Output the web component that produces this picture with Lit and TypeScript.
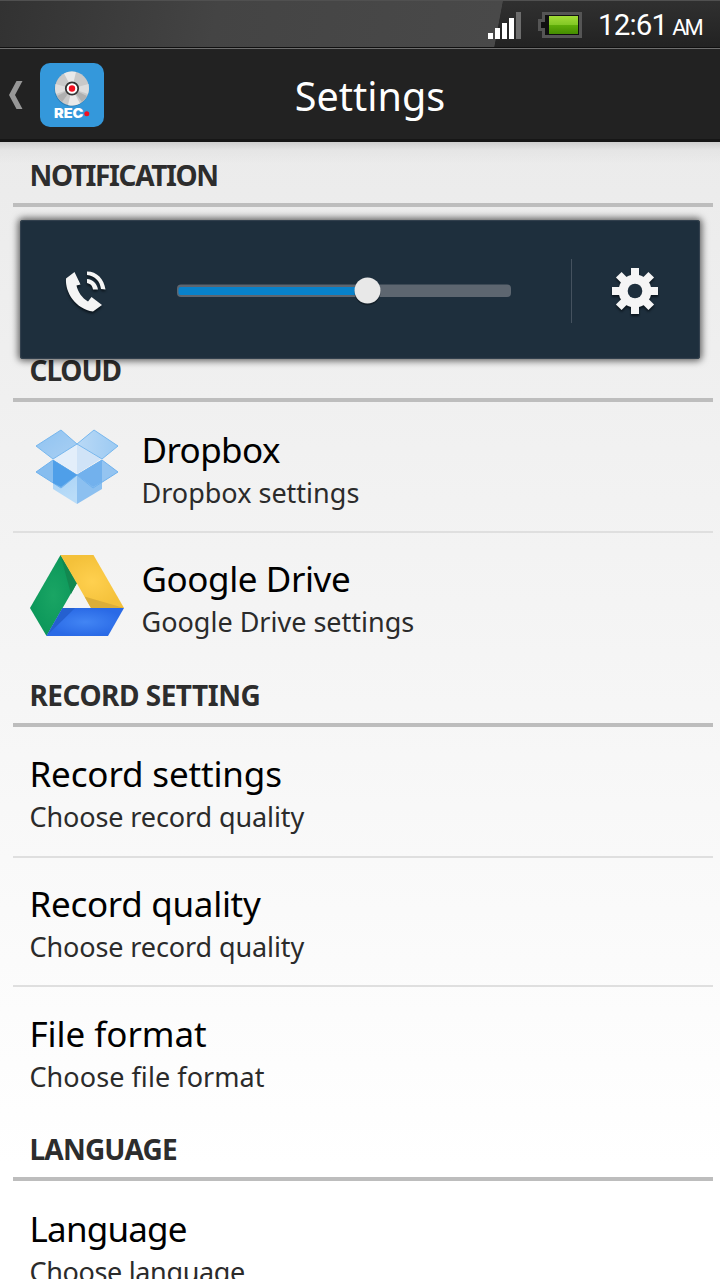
import { LitElement, html, css, svg, nothing } from "lit";
import { customElement } from "lit/decorators.js";

const dropbox = html`<svg class="dropbox" viewBox="0 0 84 76">
  <defs>
    <linearGradient id="dl" x1="0" y1="0" x2="1" y2="1"><stop offset="0" stop-color="#8fc3f1"/><stop offset="1" stop-color="#a9cff3"/></linearGradient>
    <linearGradient id="dr" x1="0" y1="0" x2="1" y2="0"><stop offset="0" stop-color="#b9d9f6"/><stop offset="1" stop-color="#9ccaf2"/></linearGradient>
    <linearGradient id="db" x1="0" y1="0" x2="0.3" y2="1"><stop offset="0" stop-color="#9fcdf4"/><stop offset="1" stop-color="#b9dcf8"/></linearGradient>
  </defs>
  <path d="M18 31V60L42 75V46z" fill="url(#db)"/>
  <path d="M67 31V60L42 75V46z" fill="#8cc0f0"/>
  <path d="M18 31L1 43 26 59 42 46z" fill="#86bdef" stroke="#6fb2ee"/>
  <path d="M18 31V54L26 58 42 46z" fill="#4f9fe9"/>
  <path d="M67 31L83 43 58 59 42 46z" fill="#94c4f1" stroke="#6fb2ee"/>
  <path d="M67 31V53L58 58 42 46z" fill="#72b1ed"/>
  <path d="M42 15L18 30 42 45z" fill="#e3eefa"/>
  <path d="M42 15L66 30 42 45z" fill="#d0e3f7"/>
  <path d="M26 1L42 15 18 30 1 17z" fill="url(#dl)" stroke="#77b7ee"/>
  <path d="M59 1L42 15 67 30 83 17z" fill="url(#dr)" stroke="#77b7ee"/>
</svg>`;

const drive = html`<svg class="drive" viewBox="0 0 94 81">
  <defs>
    <radialGradient id="gg"><stop offset="0" stop-color="#1aa564"/><stop offset="1" stop-color="#0c975a"/></radialGradient>
    <radialGradient id="gy"><stop offset="0" stop-color="#ffd04f"/><stop offset="1" stop-color="#f4c13a"/></radialGradient>
    <radialGradient id="gb"><stop offset="0" stop-color="#4285f4"/><stop offset="1" stop-color="#2a6ae6"/></radialGradient>
  </defs>
  <path d="M30.500 0L47 28 16.500 81 0 53z" fill="url(#gg)"/>
  <path d="M30.500 0L47 28 41 39z" fill="#128850"/>
  <path d="M30.500 0H63.500L94 53H61z" fill="url(#gy)"/>
  <path d="M94 53L54.500 41.500 61 53z" fill="#dcae38"/>
  <path d="M32.500 53H94L78 81H16.500z" fill="url(#gb)"/>
  <path d="M32.500 53H45L16.500 81z" fill="#2560d0"/>
</svg>`;

/* A label and its letter-spacing in pixels. */
type Label = [text: string, tracking: number];
interface Row { title: Label; sub: Label; icon?: unknown }
const sections: { name: Label; rows: Row[] }[] = [
  { name: ["NOTIFICATION", -1.38], rows: [{ title: ["", 0], sub: ["", 0] }] },
  { name: ["CLOUD", -1.1], rows: [
    { title: ["Dropbox", -0.6], sub: ["Dropbox settings", 0], icon: dropbox },
    { title: ["Google Drive", -0.42], sub: ["Google Drive settings", 0], icon: drive },
  ] },
  { name: ["RECORD SETTING", -0.5], rows: [
    { title: ["Record settings", -0.15], sub: ["Choose record quality", -0.11] },
    { title: ["Record quality", -0.3], sub: ["Choose record quality", -0.11] },
    { title: ["File format", -0.05], sub: ["Choose file format", 0.06] },
  ] },
  { name: ["LANGUAGE", -0.8], rows: [{ title: ["Language", -0.8], sub: ["Choose language", -0.35] }] },
];

const label = (cls: string, [text, tracking]: Label) =>
  html`<div class=${cls} style="letter-spacing:${tracking}px">${text}</div>`;

@customElement("app-root")
export class AppRoot extends LitElement {
  static styles = css`
    :host { display: flex; flex-direction: column; position: relative; height: 1279px; overflow: hidden;
      font-family: "Noto Sans", sans-serif; background: #fff; }
    * { box-sizing: border-box; }
    svg { display: block; flex: none; overflow: visible; }
    .status { flex: none; height: 49px; display: flex; justify-content: flex-end; align-items: flex-start;
      border-top: 1px solid #505050; border-bottom: 1px solid #6e6e6e; box-shadow: inset 0 -1px #101010;
      background: linear-gradient(100.600deg, #323232 0, #444 30%, #494949 68.950%, transparent 69.050%), linear-gradient(#303030, #222); }
    .signal { margin: 11px 17px 0 0; }
    .battery { margin: 11px 16px 0 0; }
    .clock { color: #fff; font: 29.500px/48px Roboto, sans-serif; width: 122px; white-space: nowrap; letter-spacing: -0.850px; }
    .ampm { font-size: 22px; margin-left: 5px; letter-spacing: -2px; }
    .bar { flex: none; height: 93px; display: grid; grid-template-columns: 40px 64px 1fr 84px; align-items: center;
      background: #222; border-bottom: 3px solid #161616; }
    .back { margin-left: 7.500px; }
    .title { color: #fff; font-size: 39.500px; line-height: 90px; padding-top: 2px; text-align: center; }
    .list { flex: 1; min-height: 0; background: linear-gradient(#cfcfcf 0, rgba(225,225,225,0.600) 8px, transparent 22px), linear-gradient(#ebebeb, #fff 90%); }
    .head { height: 65px; margin: 0 7px 0 13px; padding-left: 16.500px; border-bottom: 4px solid #bdbdbd;
      font-size: 28px; line-height: 66px; font-weight: 700; color: #2d2d2d; white-space: nowrap; }
    .row { height: 129.900px; margin: 0 7px 0 13px; padding-left: 16.500px; display: flex; }
    .row + .row { border-top: 2px solid #dfdfdf; margin-top: -1px; height: 130.900px; }
    .icon { width: 112px; display: flex; }
    .dropbox { width: 84px; height: 76px; margin: 27.500px 0 0 5px; }
    .drive { width: 94px; height: 81px; margin: 22px 0 0 0; }
    .name { color: #000; font-size: 35px; line-height: 48px; margin-top: 23.700px; white-space: nowrap; }
    .row + .row .name { margin-top: 22.200px; }
    .sub { color: #2b2b2b; font-size: 27px; line-height: 37px; white-space: nowrap; }
    .panel { position: absolute; left: 20px; top: 220px; width: 680px; height: 139px; border-radius: 3px;
      background: #1e2f3d; box-shadow: 0 0 7px 2px rgba(0,0,0,0.600), inset 0 0 1px 1px #35434f;
      display: flex; align-items: center; padding-left: 44px; }
    .slider { margin: 1px 0 0 69px; }
    .rule { width: 1px; height: 64px; background: #45525f; margin: 3px 0 0 60px; }
    .gear { margin: 3px 0 0 39px; filter: drop-shadow(0 2px 1px #0a141c); }
    .phone { margin-top: 4px; filter: drop-shadow(0 2px 1px #0a141c); }
  `;

  render() {
    return html`
      <div class="status">
        <svg class="signal" width="34" height="28" viewBox="0 0 34 28" shape-rendering="crispEdges">
          <path d="M1 21h5v6H1zM8 16h5v11H8zM15 11h5v16H15zM22 6h5v21H22z" fill="#fff"/><path d="M29 0h5v27h-5z" fill="#6d6d6d"/>
        </svg>
        <svg class="battery" width="44" height="26" viewBox="0 0 44 26">
          <defs><linearGradient id="bat" x1="0" y1="0" x2="0" y2="1"><stop offset="0" stop-color="#a2dc37"/><stop offset=".48" stop-color="#83c825"/><stop offset=".5" stop-color="#5fae08"/><stop offset="1" stop-color="#458d00"/></linearGradient></defs>
          <path d="M4 0H44V26H4V19H0V7H4z" fill="#555"/><path d="M7 3H41V23H7V16H3V10H7z" fill="#101010"/><path d="M11 4H40V22H11z" fill="url(#bat)"/>
        </svg>
        <div class="clock">12:61<span class="ampm">AM</span></div>
      </div>
      <div class="bar">
        <svg class="back" width="15" height="28" viewBox="0 0 15 28"><path d="M8.500 0H14.500L7 14 14.500 28H8.500L1 14z" fill="#979797"/></svg>
        <svg width="64" height="64" viewBox="0 0 64 64">
          <rect width="64" height="64" rx="10" fill="#3498db"/>
          <circle cx="31.500" cy="26.500" r="17" fill="#2c80ba"/>
          <circle cx="32" cy="25.500" r="17" fill="#c9c9c9"/>
          <path d="M32 25.500L24 10.500A17 17 0 0 1 36 9zM32 25.500L28 42A17 17 0 0 0 40 40.500z" fill="#e9e9e9"/>
          <path d="M32 25.500L15.500 21A17 17 0 0 0 16 31zM32 25.500L48.500 21A17 17 0 0 1 48 31z" fill="#dedede"/>
          <path d="M32 25.500L17 33A17 17 0 0 0 22 39zM32 25.500L47 33A17 17 0 0 1 42 39z" fill="#b0b0b0"/>
          <circle cx="32" cy="25.500" r="6.200" fill="#fff" stroke="#333" stroke-width="1.800"/><circle cx="32" cy="25.500" r="3.200" fill="#f30f20"/>
          <text x="14" y="55" font-family="Inter, sans-serif" font-size="13" font-weight="900" fill="#fff" textLength="29.500" lengthAdjust="spacingAndGlyphs">REC</text>
          <circle cx="46.800" cy="50.700" r="2.500" fill="#f30f20"/>
        </svg>
        <div class="title">Settings</div>
      </div>
      <div class="list">
        ${sections.map((s) => html`${label("head", s.name)}
          ${s.rows.map((r) => html`<div class="row">
            ${r.icon ? html`<div class="icon">${r.icon}</div>` : nothing}
            <div>${label("name", r.title)}${label("sub", r.sub)}</div>
          </div>`)}`)}
      </div>
      <div class="panel">
        <svg class="phone" width="44" height="42" viewBox="0 0 44 42" fill="#f5f5f5">
          <path d="M10.500 1L2 7.500C1 22 12 38 29 40.500L38 34 27.500 26 24 30.500C18 27 14 21 12.500 14.500L16.500 13.500z"/>
          <path d="M23 .5C33 .5 40 8 41.500 18.500L37 18C36 10 31 5 23 4zM23 8C29 8.500 33 12.500 34 18.500H29C28.500 15 27 13 23 12z"/>
        </svg>
        <svg class="slider" width="334" height="28" viewBox="0 0 334 28">
          <rect x="0" y="8.500" width="334" height="12.500" rx="4" fill="#5d6670"/>
          <rect x="1.500" y="11" width="190" height="8" rx="2" fill="#0882cb"/>
          <circle cx="190.500" cy="16.200" r="13" fill="#0c151c" opacity=".6"/><circle cx="190.500" cy="14.500" r="13" fill="#e8e8e8"/>
        </svg>
        <div class="rule"></div>
        <svg class="gear" width="48" height="48" viewBox="-24 -24 48 48">
          <g fill="#f5f5f5">${[0, 45, 90, 135].map((a) => svg`<rect x="-4" y="-23" width="8" height="46" transform="rotate(${a})"/>`)}<circle r="16.500"/></g>
          <circle r="7.300" fill="#1e2f3d"/>
        </svg>
      </div>`;
  }
}
